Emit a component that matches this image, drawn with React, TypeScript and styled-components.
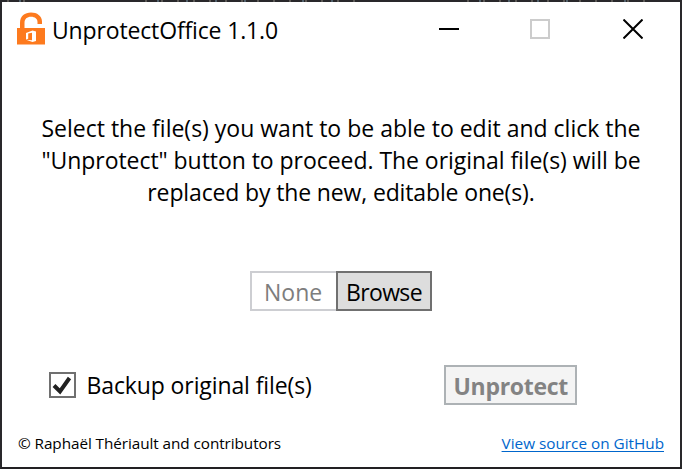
import React from "react";
import styled, { createGlobalStyle } from "styled-components";

const GlobalStyle = createGlobalStyle`
  * { box-sizing: border-box; }
  body { margin: 0; background: #29282b; }
`;

const Window = styled.main`
  position: relative;
  width: 682px;
  height: 469px;
  display: flex;
  flex-direction: column;
  border: 2px solid #29282b;
  border-bottom-color: #222023;
  background: #fff;
  color: #000;
  font-family: "Open Sans", "Noto Sans", sans-serif;
  font-size: 23px;
  line-height: 32px;
  white-space: nowrap;
`;

const EdgeTexture = styled.div<{ $left: number; $width: number }>`
  position: absolute;
  top: -2px;
  left: ${(p) => p.$left}px;
  width: ${(p) => p.$width}px;
  height: 2px;
  background:
    repeating-linear-gradient(90deg, transparent 0 7px, #5b5855 7px 9px, transparent 9px 16px),
    repeating-linear-gradient(90deg, transparent 0 19px, #51606b 19px 21px, transparent 21px 29px);
`;

const TitleBar = styled.header`
  height: 56px;
  display: flex;
  align-items: center;
  padding-left: 15px;

  > svg {
    margin-top: -4px;
  }
`;

const Title = styled.h1`
  flex: 1;
  margin: 0 0 0 7px;
  font-size: 23px;
  font-weight: 400;
  line-height: 32px;
`;

const Controls = styled.div`
  display: flex;
  height: 56px;
`;

const ControlButton = styled.button<{ $width: number }>`
  width: ${(p) => p.$width}px;
  height: 54px;
  padding: 0;
  border: 0;
  background: none;
  display: flex;
  align-items: center;
  justify-content: center;
`;

const Message = styled.p`
  margin: 54px 0 0;
  display: flex;
  flex-direction: column;
  align-items: center;
`;

const Fit = styled.span<{ $spacing: number }>`
  letter-spacing: ${(p) => p.$spacing}px;
`;

const Picker = styled.div`
  display: flex;
  margin: 63px 0 0 248px;
  height: 40px;
`;

const FileCount = styled.div`
  width: 86px;
  border: 2px solid #cdced2;
  border-right: 0;
  line-height: 38px;
  padding-left: 12px;
  color: #7d7d7d;
`;

const Button = styled.button<{ $width: number; $muted?: boolean }>`
  width: ${(p) => p.$width}px;
  height: 40px;
  padding: 0 0 0 ${(p) => (p.$muted ? 7.5 : 8)}px;
  border: 2px solid ${(p) => (p.$muted ? "#adb2b5" : "#707070")};
  background: ${(p) => (p.$muted ? "#f4f4f4" : "#ddd")};
  color: ${(p) => (p.$muted ? "#838383" : "#000")};
  font: inherit;
  font-weight: ${(p) => (p.$muted ? 700 : 400)};
  line-height: 38px;
  text-align: left;
`;

const Actions = styled.div`
  display: flex;
  justify-content: space-between;
  align-items: center;
  height: 40px;
  margin: 54px 103px 0 47px;
`;

const Option = styled.label`
  display: flex;
  align-items: center;
  gap: 10.5px;
`;

const CheckBox = styled.span`
  width: 27px;
  height: 26px;
  border: 2px solid #707070;
  display: flex;
`;

const Footer = styled.footer`
  display: flex;
  justify-content: space-between;
  margin: 26px 16px 0 16px;
  font-size: 15.3px;
  line-height: 24px;
`;

const Link = styled.a`
  color: #0066cc;
  text-decoration: underline;
  text-decoration-skip-ink: none;
  text-decoration-thickness: 1px;
  text-underline-offset: 2px;
`;

function LockIcon() {
  return (
    <svg width="28" height="33" viewBox="0 0 28 33">
      <path d="M0 16H3V11C3 4 8 .6 14 .6C20 .6 25 4 25 9.5V12H20.5V10C20.5 7 18 4.8 14 4.8C10 4.8 7.5 7 7.5 11V16H28V32.5H0Z" fill="#fd7a1e" />
      <path d="M9 21L15.5 18.5L19 19.5V29L15.5 30L9 27.8L15 28.3V20.7L11.2 21.6V26.7L9 27.6Z" fill="#fff" />
    </svg>
  );
}

export default function App() {
  return (
    <>
      <GlobalStyle />
      <Window>
        <EdgeTexture $left={-2} $width={30} />
        <EdgeTexture $left={136} $width={218} />
        <EdgeTexture $left={458} $width={192} />
        <TitleBar>
          <LockIcon />
          <Title><Fit $spacing={-0.15}>UnprotectOffice 1.1.0</Fit></Title>
          <Controls>
            <ControlButton $width={90} aria-label="Minimize">
              <svg width="20" height="20"><path d="M0 10H20" stroke="#000" strokeWidth="2" /></svg>
            </ControlButton>
            <ControlButton $width={92} aria-label="Maximize" disabled>
              <svg width="20" height="20"><path d="M1 1H19V19H1Z" fill="none" stroke="#ccc" strokeWidth="2" /></svg>
            </ControlButton>
            <ControlButton $width={94} aria-label="Close">
              <svg width="20" height="20"><path d="M.5 .5L19.5 19.5M19.5 .5L.5 19.5" stroke="#000" strokeWidth="2" /></svg>
            </ControlButton>
          </Controls>
        </TitleBar>
        <Message>
          <Fit $spacing={0}>Select the file(s) you want to be able to edit and click the</Fit>
          <Fit $spacing={-0.05}>"Unprotect" button to proceed. The original file(s) will be</Fit>
          <Fit $spacing={-0.14}>replaced by the new, editable one(s).</Fit>
        </Message>
        <Picker>
          <FileCount><Fit $spacing={0}>None</Fit></FileCount>
          <Button $width={96}><Fit $spacing={-0.65}>Browse</Fit></Button>
        </Picker>
        <Actions>
          <Option>
            <CheckBox>
              <svg width="23" height="22"><path d="M3 11.5L9 17.5L18.5 4" fill="none" stroke="#212121" strokeWidth="4" /></svg>
            </CheckBox>
            <Fit $spacing={-0.11}>Backup original file(s)</Fit>
          </Option>
          <Button $width={133} $muted disabled><Fit $spacing={-0.3}>Unprotect</Fit></Button>
        </Actions>
        <Footer>
          <Fit $spacing={-0.07}>© Raphaël Thériault and contributors</Fit>
          <Link><Fit $spacing={0}>View source on GitHub</Fit></Link>
        </Footer>
      </Window>
    </>
  );
}
